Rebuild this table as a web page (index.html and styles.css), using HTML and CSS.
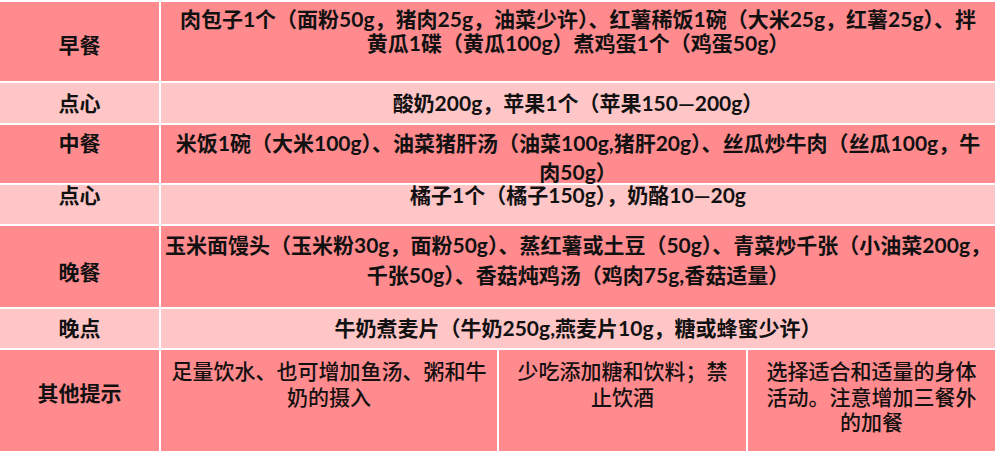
FILE: index.html
```html
<!DOCTYPE html>
<html lang="zh-CN">
<head>
<meta charset="utf-8">
<title>一日食谱</title>
<link rel="stylesheet" href="styles.css">
</head>
<body>
<div class="menu">
  <div class="cell dark label r1">早餐</div>
  <div class="cell dark text r1">肉包子1个（面粉50g，猪肉25g，油菜少许）、红薯稀饭1碗（大米25g，红薯25g）、拌<br>黄瓜1碟（黄瓜100g）煮鸡蛋1个（鸡蛋50g）</div>

  <div class="cell light label r2">点心</div>
  <div class="cell light text r2">酸奶200g，苹果1个（苹果150—200g）</div>

  <div class="cell dark label r3">中餐</div>
  <div class="cell dark text r3">米饭1碗（大米100g）、油菜猪肝汤（油菜100g,猪肝20g）、丝瓜炒牛肉（丝瓜100g，牛<br>肉50g）</div>

  <div class="cell light label r4">点心</div>
  <div class="cell light text r4">橘子1个（橘子150g），奶酪10—20g</div>

  <div class="cell dark label r5">晚餐</div>
  <div class="cell dark text r5">玉米面馒头（玉米粉30g，面粉50g）、蒸红薯或土豆（50g）、青菜炒千张（小油菜200g，<br>千张50g）、香菇炖鸡汤（鸡肉75g,香菇适量）</div>

  <div class="cell light label r6">晚点</div>
  <div class="cell light text r6">牛奶煮麦片（牛奶250g,燕麦片10g，糖或蜂蜜少许）</div>

  <div class="cell dark label r7">其他提示</div>
  <div class="tips">
    <div class="cell dark tip">足量饮水、也可增加鱼汤、粥和牛<br>奶的摄入</div>
    <div class="cell dark tip">少吃添加糖和饮料；禁<br>止饮酒</div>
    <div class="cell dark tip">选择适合和适量的身体<br>活动。注意增加三餐外<br>的加餐</div>
  </div>
</div>
</body>
</html>
```

FILE: styles.css
```css
html, body {
  margin: 0;
  padding: 0;
  background: #ffffff;
}

body {
  width: 998px;
  height: 453px;
  overflow: hidden;
}

.menu {
  width: 995px;
  display: grid;
  grid-template-columns: 159px 834px;
  grid-template-rows: 79px 40px 58px 39px 81px 39px 101px;
  gap: 2px;
  padding-top: 2px;
  background: #ffffff;
  font-family: Lato, "Noto Sans CJK SC", sans-serif;
  font-weight: 700;
  font-size: 21px;
  color: #111111;
}

.cell {
  box-sizing: border-box;
  text-align: center;
  white-space: nowrap;
  overflow: visible;
}

.dark { background: #ff8b8e; }
.light { background: #ffc6c7; }

.r1 { line-height: 24px; padding-top: 5px; }
.r1.label { padding-top: 31px; }
.r2 { line-height: 24px; padding-top: 8px; }
.r3 { line-height: 29px; padding-top: 3px; }
.r4 { line-height: 20px; padding-top: 0; }
.r5 { line-height: 30px; padding-top: 4px; }
.r5.label { padding-top: 31px; }
.r6 { line-height: 24px; padding-top: 7px; }
.r7 { line-height: 24px; padding-top: 31px; }

.tips {
  display: grid;
  grid-template-columns: 336px 247px 247px;
  gap: 2px;
  background: #ffffff;
}

.tip {
  font-family: "Noto Sans CJK SC", sans-serif;
  font-weight: 500;
  line-height: 25.5px;
  padding-top: 8px;
  color: #151010;
}
```
